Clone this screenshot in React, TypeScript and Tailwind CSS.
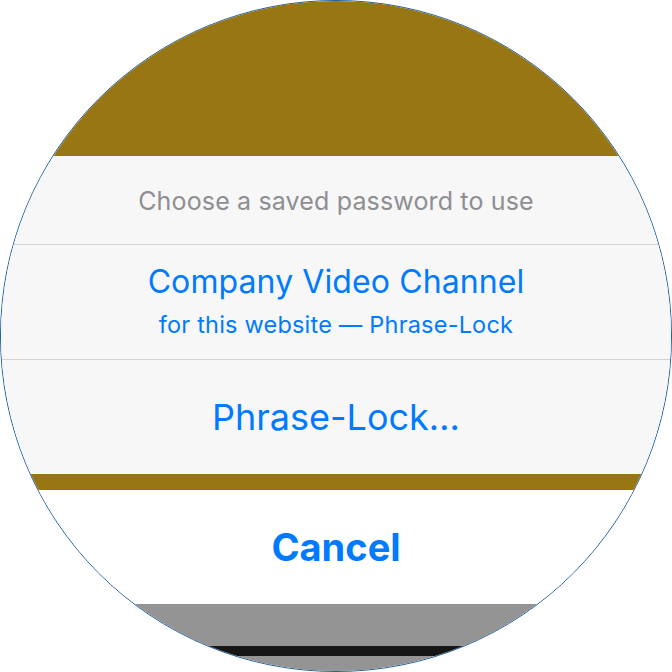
import React from "react";

const FONT = { fontFamily: "Inter, 'Noto Sans', 'Liberation Sans', sans-serif" };

export default function App() {
  return (
    <div className="w-[672px] h-[672px] bg-white" style={FONT}>
      <div className="w-[672px] h-[672px] rounded-full overflow-hidden border border-[#1f5f99] flex flex-col">
        {/* 背景（上） */}
        <div className="h-[155px] shrink-0 bg-[#987613]" />

        {/* シート */}
        <div className="bg-[#f7f7f7] flex flex-col shrink-0">
          <div className="h-[88px] flex items-center justify-center pt-[3px] text-[25px] text-[#8e8e93] tracking-[0.15px]">
            Choose a saved password to use
          </div>
          <div className="h-px bg-[#d2d2d2]" />
          <div className="h-[114px] flex flex-col items-center justify-center pb-[2px] text-[#007aff]">
            <div className="text-[32px] leading-[40px] tracking-[0.1px]">Company Video Channel</div>
            <div className="text-[23.5px] leading-[30px] mt-[8px] tracking-[0.2px]">for this website — Phrase-Lock</div>
          </div>
          <div className="h-px bg-[#d2d2d2]" />
          <div className="h-[114px] flex items-center justify-center text-[36px] text-[#007aff]">
            Phrase-Lock…
          </div>
        </div>

        <div className="h-[16px] shrink-0 bg-[#987613]" />

        <div className="h-[114px] shrink-0 bg-white flex items-center justify-center text-[38px] font-bold text-[#007aff]">
          Cancel
        </div>

        <div className="h-[42px] shrink-0 bg-[#949494]" />
        <div className="h-[10px] shrink-0 bg-[#161616]" />
        <div className="flex-1 bg-[#949494]" />
      </div>
    </div>
  );
}
